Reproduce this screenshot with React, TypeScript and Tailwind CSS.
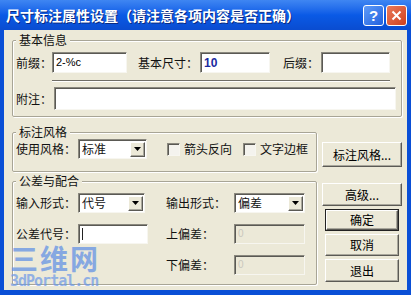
import React from 'react';

const cjk = "font-['Noto_Sans_CJK_SC',sans-serif]";
const sunken =
  'border border-t-[#8a887e] border-l-[#8a887e] border-r-[#f7f6f0] border-b-[#f7f6f0] shadow-[inset_1px_1px_0_#5a5954]';
const raised =
  'border border-t-white border-l-white border-r-[#5b5a55] border-b-[#5b5a55] shadow-[inset_-1px_-1px_0_#a9a79c] bg-[#ece9d8]';

const Label: React.FC<{ text: string; w?: string }> = ({ text, w = '' }) => (
  <span className={`text-[12px] leading-[12px] text-[#111] whitespace-nowrap ${w}`}>{text}</span>
);

const Input: React.FC<{ w: string; h?: string; children?: React.ReactNode; disabled?: boolean }> = ({
  w,
  h = 'h-[21px]',
  children,
  disabled,
}) => (
  <div
    className={`${w} ${h} ${sunken} ${disabled ? 'bg-[#ece9d8]' : 'bg-white'} flex items-center px-[3px] shrink-0`}
  >
    {children}
  </div>
);

const Select: React.FC<{ w: string; value: string }> = ({ w, value }) => (
  <div className={`${w} h-[20px] ${sunken} bg-white flex items-center justify-between shrink-0`}>
    <span className="text-[12px] leading-[12px] pl-[3px] text-[#111]">{value}</span>
    <span className={`w-[15px] h-[15px] mr-[1px] ${raised} flex items-center justify-center`}>
      <svg width="7" height="4" viewBox="0 0 7 4">
        <path d="M0 0h7L3.5 4z" fill="#000" />
      </svg>
    </span>
  </div>
);

const Check: React.FC<{ label: string }> = ({ label }) => (
  <div className="flex items-center gap-[4px]">
    <span className={`w-[13px] h-[13px] ${sunken} bg-[#f4f3ee]`} />
    <Label text={label} />
  </div>
);

const Group: React.FC<{ title: string; className?: string; children: React.ReactNode }> = ({
  title,
  className = '',
  children,
}) => (
  <fieldset
    className={`border border-[#a8a596] rounded-[2px] shadow-[inset_1px_1px_0_#fff,1px_1px_0_#fff] pl-[3px] ${className}`}
  >
    <legend className="bg-[#ece9d8] px-[3px] text-[12px] leading-[12px] text-[#111]">{title}</legend>
    {children}
  </fieldset>
);

const Btn: React.FC<{ text: string; className?: string; def?: boolean }> = ({ text, className = '', def }) =>
  def ? (
    <div className={`border border-[#222] ${className}`}>
      <div className={`h-full ${raised} flex items-center justify-center text-[12px] leading-[12px]`}>{text}</div>
    </div>
  ) : (
    <div className={`${raised} flex items-center justify-center text-[12px] leading-[12px] ${className}`}>{text}</div>
  );

export default function App() {
  return (
    <div className={`w-[411px] h-[295px] bg-[#0a4fd6] flex flex-col overflow-hidden ${cjk}`}>
      {/* title bar */}
      <div className="h-[30px] shrink-0 bg-gradient-to-b from-[#3f86f2] via-[#0a5ae6] to-[#0a4cd0] flex items-center pl-[6px] pr-[4px]">
        <span className="text-white font-bold text-[14px] leading-[14px] [text-shadow:1px_1px_0_#0a2a80]">
          尺寸标注属性设置（请注意各项内容是否正确）
        </span>
        <div className="ml-auto flex gap-[2px]">
          <div className="w-[21px] h-[21px] rounded-[3px] border border-white bg-gradient-to-br from-[#5f9bf8] to-[#2160de] flex items-center justify-center text-white font-bold text-[15px] leading-[15px] font-['Liberation_Sans',sans-serif]">
            ?
          </div>
          <div className="w-[21px] h-[21px] rounded-[3px] border border-white bg-gradient-to-br from-[#ea7a5a] to-[#cf3f1c] flex items-center justify-center">
            <svg width="11" height="11" viewBox="0 0 11 11">
              <path d="M1.5 1.5l8 8M9.5 1.5l-8 8" stroke="#fff" strokeWidth="2" />
            </svg>
          </div>
        </div>
      </div>

      {/* client area */}
      <div className="relative flex-1 mx-[4px] mb-[5px] bg-[#ece9d8] pl-[8px] pr-[5px] pt-[4px]">
        <Group title="基本信息" className="pb-[6px] pr-[5px]">
          <div className="flex items-center mt-[6px]">
            <Label text="前缀：" w="w-[36px]" />
            <Input w="w-[75px]">
              <span className="text-[11px] leading-[11px] font-['Liberation_Sans',sans-serif]">2-%c</span>
            </Input>
            <Label text="基本尺寸：" w="ml-[11px] w-[62px]" />
            <Input w="w-[70px]">
              <span className="text-[12px] leading-[12px] font-bold text-[#1b2aa0] font-['Liberation_Sans',sans-serif]">
                10
              </span>
            </Input>
            <Label text="后缀：" w="ml-[13px] w-[38px]" />
            <Input w="w-[69px]" />
          </div>
          <div className="ml-[36px] mr-[6px] mt-[7px] h-[2px] bg-[#6f6d66] border-b border-white" />
          <div className="flex items-center mt-[5px]">
            <Label text="附注：" w="w-[38px]" />
            <Input w="w-[342px]" h="h-[23px]" />
          </div>
        </Group>

        <div className="flex gap-[5px] mt-[9px]">
          <div className="w-[305px] flex flex-col">
            <Group title="标注风格" className="pb-[12px]">
              <div className="flex items-center mt-[1px]">
                <Label text="使用风格：" w="w-[62px]" />
                <Select w="w-[69px]" value="标准" />
                <div className="ml-[20px]">
                  <Check label="箭头反向" />
                </div>
                <div className="ml-[11px]">
                  <Check label="文字边框" />
                </div>
              </div>
            </Group>

            <Group title="公差与配合" className="mt-[3px] pb-[9px]">
              <div className="grid grid-cols-[62px_70px_18px_68px_71px] grid-rows-[20px_20px_20px] gap-y-[11px] mt-[6px] items-center">
                <Label text="输入形式：" />
                <Select w="w-[67px]" value="代号" />
                <span />
                <Label text="输出形式：" />
                <Select w="w-[71px]" value="偏差" />

                <Label text="公差代号：" />
                <Input w="w-[70px]" h="h-[20px]">
                  <span className="w-[1px] h-[12px] bg-[#222]" />
                </Input>
                <span />
                <Label text="上偏差：" />
                <Input w="w-[71px]" h="h-[20px]" disabled>
                  <span className="text-[10px] leading-[10px] text-[#c9c7bd] font-['Liberation_Sans',sans-serif]">0</span>
                </Input>

                <span />
                <span />
                <span />
                <Label text="下偏差：" />
                <Input w="w-[71px]" h="h-[20px]" disabled>
                  <span className="text-[10px] leading-[10px] text-[#c9c7bd] font-['Liberation_Sans',sans-serif]">0</span>
                </Input>
              </div>
            </Group>
          </div>

          <div className="w-[80px] flex flex-col">
            <Btn text="标注风格..." className="mt-[16px] h-[25px]" />
            <Btn text="高级..." className="mt-[16px] h-[23px]" />
            <Btn text="确定" def className="mt-[3px] h-[22px] mx-[3px]" />
            <Btn text="取消" className="mt-[3px] h-[22px] mx-[3px]" />
            <Btn text="退出" className="mt-[3px] h-[23px] mx-[3px]" />
          </div>
        </div>

        {/* watermark */}
        <div className="absolute left-[6px] top-[216px] flex flex-col items-start gap-[2px] pointer-events-none opacity-70">
          <span className="text-[28px] leading-[24px] font-bold text-[#5b8de6] tracking-[2px]">三维网</span>
          <span className="text-[15px] leading-[18px] font-bold text-[#6b98e8] font-['DejaVu_Sans_Mono',monospace] tracking-[-1px]">
            3dPortal.cn
          </span>
        </div>
      </div>
    </div>
  );
}
